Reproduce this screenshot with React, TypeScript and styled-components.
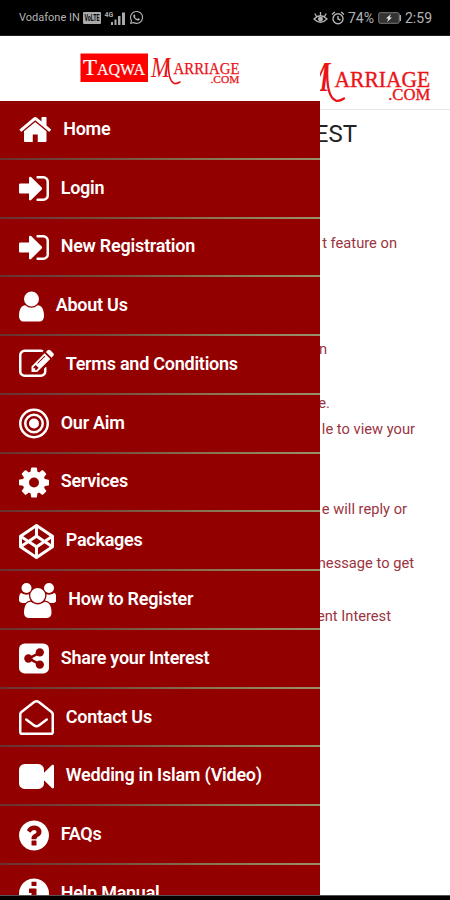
import React from 'react';
import styled, { createGlobalStyle } from 'styled-components';
import { FaCodepen, FaWhatsapp } from 'react-icons/fa';

const GlobalStyle = createGlobalStyle`
  * { box-sizing: border-box; }
  body { margin: 0; background: #fff; font-family: Roboto, "Liberation Sans", sans-serif; }
`;

const Screen = styled.div`
  width: 450px;
  height: 900px;
  display: flex;
  flex-direction: column;
  overflow: hidden;
  background: #fff;
`;

const StatusBar = styled.header`
  flex: none;
  height: 36px;
  padding: 0 18px 0 19px;
  display: flex;
  align-items: center;
  justify-content: space-between;
  background: #000;
  color: #b4b4b4;
  border-bottom: 1px solid #222;
`;

const StatusGroup = styled.div<{ $gap: number }>`
  display: flex;
  align-items: center;
  gap: ${(p) => p.$gap}px;
  svg { display: block; flex: none; }
`;

const Carrier = styled.span`
  font-size: 11px;
  line-height: 14px;
  width: 61px;
  white-space: nowrap;
`;

const StatusText = styled.span<{ $size: number; $width: number }>`
  width: ${(p) => p.$width}px;
  font-size: ${(p) => p.$size}px;
  line-height: 18px;
  white-space: nowrap;
`;

const Body = styled.div`
  flex: none;
  display: flex;
  height: 859px;
`;

const Drawer = styled.nav`
  flex: none;
  width: 320px;
  height: 859px;
  overflow: hidden;
  background: #fff;
`;

const DrawerHeader = styled.div`
  height: 65px;
  padding: 16px 0 0 80px;
  svg { display: block; }
`;

const MenuItem = styled.a`
  display: flex;
  align-items: center;
  height: 58.77px;
  padding: 0 0 1px 18.5px;
  gap: 12.2px;
  color: #fff;
  background: linear-gradient(90deg, #6a3030 0%, #75503f 35%, #8a7a55 70%, #99906a 100%) bottom / 100% 2px no-repeat, #930000;
`;

const MenuIcon = styled.svg`
  display: block;
  flex: none;
  height: 35px;
  fill: currentColor;
`;

const MenuLabel = styled.span`
  margin-top: -2px;
  font-size: 18px;
  line-height: 24px;
  font-weight: 600;
  letter-spacing: -0.25px;
  white-space: nowrap;
`;

const Page = styled.main`
  flex: 1;
  min-width: 0;
  height: 859px;
  overflow: hidden;
  background: #fff;
`;

const PageHeader = styled.div`
  height: 74px;
  padding-top: 19px;
  display: flex;
  justify-content: flex-end;
  padding-right: 19px;
  overflow: hidden;
  border-bottom: 1px solid #e6e6e6;
  svg { flex: none; }
`;

const ClippedLine = styled.div<{ $top: number; $right: number }>`
  display: flex;
  justify-content: flex-end;
  margin-top: ${(p) => p.$top}px;
  padding-right: ${(p) => p.$right}px;
  overflow: hidden;
  white-space: nowrap;
`;

const Title = styled.h1`
  margin: 0;
  font-size: 24px;
  line-height: 30px;
  font-weight: 400;
  color: #222;
`;

const Copy = styled.p`
  flex: none;
  margin: 0;
  font-size: 14.7px;
  line-height: 20px;
  color: #9a3440;
`;

const NavigationBar = styled.div`
  flex: 1;
  background: #000;
  border-top: 1px solid #555;
`;

const DISC =
  'm640 416q0 209-103 385.5t-279.5 279.5-385.5 103-385.5-103-279.5-279.5-103-385.5 103-385.5 279.5-279.5 385.5-103 385.5 103 279.5 279.5 103 385.5z';

const PATHS = {
  home: 'M1472 992v480q0 26-19 45t-45 19h-384v-384h-256v384h-384q-26 0-45-19t-19-45v-480q0-1 .5-3t.5-3l575-474 575 474q1 2 1 6zm223-69l-62 74q-8 9-21 11h-3q-13 0-21-7l-692-577-692 577q-12 8-24 7-13-2-21-11l-62-74q-8-10-7-23.5t11-21.5l719-599q32-26 76-26t76 26l244 204v-195q0-14 9-23t23-9h192q14 0 23 9t9 23v408l219 182q10 8 11 21.5t-7 23.5z',
  signIn:
    'M1312 896q0 26-19 45l-544 544q-19 19-45 19t-45-19-19-45v-288h-448q-26 0-45-19t-19-45v-384q0-26 19-45t45-19h448v-288q0-26 19-45t45-19 45 19l544 544q19 19 19 45zm352-352v704q0 119-84.5 203.5t-203.5 84.5h-320q-13 0-22.5-9.5t-9.5-22.5q0-4-1-20t-.5-26.5 3-23.5 10-19.5 20.5-6.5h320q66 0 113-47t47-113v-704q0-66-47-113t-113-47h-312l-11.5-1-11.5-3-8-5.5-7-9-2-13.5q0-4-1-20t-.5-26.5 3-23.5 10-19.5 20.5-6.5h320q119 0 203.5 84.5t84.5 203.5z',
  user: 'M1536 1399q0 109-62.5 187t-150.5 78h-854q-88 0-150.5-78t-62.5-187q0-85 8.5-160.5t31.5-152 58.5-131 94-89 134.5-34.5q131 128 313 128t313-128q76 0 134.5 34.5t94 89 58.5 131 31.5 152 8.5 160.5zm-256-887q0 159-112.5 271.5t-271.5 112.5-271.5-112.5-112.5-271.5 112.5-271.5 271.5-112.5 271.5 112.5 112.5 271.5z',
  edit: 'M888 1184l116-116-152-152-116 116v56h96v96h56zm440-720q-16-16-33 1l-350 350q-17 17-1 33t33-1l350-350q17-17 1-33zm80 594v190q0 119-84.5 203.5t-203.5 84.5h-832q-119 0-203.5-84.5t-84.5-203.5v-832q0-119 84.5-203.5t203.5-84.5h832q63 0 117 25 15 7 18 23 3 17-9 29l-49 49q-14 14-32 8-23-6-45-6h-832q-66 0-113 47t-47 113v832q0 66 47 113t113 47h832q66 0 113-47t47-113v-126q0-13 9-22l64-64q15-15 35-7t20 29zm-96-738l288 288-672 672h-288v-288zm444 132l-92 92-288-288 92-92q28-28 68-28t68 28l152 152q28 28 28 68t-28 68z',
  cog: 'M1152 896q0-106-75-181t-181-75-181 75-75 181 75 181 181 75 181-75 75-181zm512-109v222q0 12-8 23t-20 13l-185 28q-19 54-39 91 35 50 107 138 10 12 10 25t-9 23q-27 37-99 108t-94 71q-12 0-26-9l-138-108q-44 23-91 38-16 136-29 186-7 28-36 28h-222q-14 0-24.5-8.5t-11.5-21.5l-28-184q-49-16-90-37l-141 107q-10 9-25 9-14 0-25-11-126-114-165-168-7-10-7-23 0-12 8-23 15-21 51-66.5t54-70.5q-27-50-41-99l-183-27q-13-2-21-12.5t-8-23.5v-222q0-12 8-23t19-13l186-28q14-46 39-92-40-57-107-138-10-12-10-24 0-10 9-23 26-36 98.5-107.5t94.5-71.5q13 0 26 10l138 107q44-23 91-38 16-136 29-186 7-28 36-28h222q14 0 24.5 8.5t11.5 21.5l28 184q49 16 90 37l142-107q9-9 24-9 13 0 25 10 129 119 165 170 7 8 7 22 0 12-8 23-15 21-51 66.5t-54 70.5q26 50 41 98l183 28q13 2 21 12.5t8 23.5z',
  users:
    'M657 896q-162 5-265 128h-134q-82 0-138-40.5t-56-118.5q0-353 124-353 6 0 43.5 21t97.5 42.5 119 21.5q67 0 133-23-5 37-5 66 0 139 81 256zm1071 637q0 120-73 189.5t-194 69.5h-874q-121 0-194-69.5t-73-189.5q0-53 3.5-103.5t14-109 26.5-108.5 43-97.5 62-81 85.5-53.5 111.5-20q10 0 43 21.5t73 48 107 48 135 21.5 135-21.5 107-48 73-48 43-21.5q61 0 111.5 20t85.5 53.5 62 81 43 97.5 26.5 108.5 14 109 3.5 103.5zm-1024-1277q0 106-75 181t-181 75-181-75-75-181 75-181 181-75 181 75 75 181zm704 384q0 159-112.5 271.5t-271.5 112.5-271.5-112.5-112.5-271.5 112.5-271.5 271.5-112.5 271.5 112.5 112.5 271.5zm576 225q0 78-56 118.5t-138 40.5h-134q-103-123-265-128 81-117 81-256 0-29-5-66 66 23 133 23 59 0 119-21.5t97.5-42.5 43.5-21q124 0 124 353zm-128-609q0 106-75 181t-181 75-181-75-75-181 75-181 181-75 181 75 75 181z',
  video:
    'M1792 352v1088q0 42-39 59-13 5-25 5-27 0-45-19l-403-403v166q0 119-84.5 203.5t-203.5 84.5h-704q-119 0-203.5-84.5t-84.5-203.5v-704q0-119 84.5-203.5t203.5-84.5h704q119 0 203.5 84.5t84.5 203.5v165l403-402q18-19 45-19 12 0 25 5 39 17 39 59z',
  question:
    'M1024 1376v-192q0-14-9-23t-23-9h-192q-14 0-23 9t-9 23v192q0 14 9 23t23 9h192q14 0 23-9t9-23zm256-672q0-88-55.5-163t-138.5-116-170-41q-243 0-371 213-15 24 8 42l132 100q7 6 19 6 16 0 25-12 53-68 86-92 34-24 86-24 48 0 85.5 26t37.5 59q0 38-20 61t-68 45q-63 28-115.5 86.5t-52.5 125.5v36q0 14 9 23t23 9h192q14 0 23-9t9-23q0-19 21.5-49.5t54.5-49.5q32-18 49-28.5t46-35 44.5-48 28-60.5 12.5-81zm384 192q0 209-103 385.5t-279.5 279.5-385.5 103-385.5-103-279.5-279.5-103-385.5 103-385.5 279.5-279.5 385.5-103 385.5 103 279.5 279.5 103 385.5z',
  info:
    'M1152 1376v-160q0-14-9-23t-23-9h-96v-512q0-14-9-23t-23-9h-320q-14 0-23 9t-9 23v160q0 14 9 23t23 9h96v320h-96q-14 0-23 9t-9 23v160q0 14 9 23t23 9h448q14 0 23-9t9-23zm-128-896v-160q0-14-9-23t-23-9h-192q-14 0-23 9t-9 23v160q0 14 9 23t23 9h192q14 0 23-9t9-23z' + DISC,
};

const UNIT = 35 / 1792;

const Glyph = ({ x, w, children }: { x: number; w: number; children: React.ReactNode }) => (
  <MenuIcon viewBox={`${x} 0 ${w} 1792`} width={w * UNIT}>
    {children}
  </MenuIcon>
);

const TargetIcon = () => (
  <Glyph x={128} w={1536}>
    <circle cx="896" cy="896" r="256" />
    <circle cx="896" cy="896" r="448" fill="none" stroke="currentColor" strokeWidth="128" />
    <circle cx="896" cy="896" r="704" fill="none" stroke="currentColor" strokeWidth="128" />
  </Glyph>
);

const ShareIcon = () => (
  <Glyph x={128} w={1536}>
    <rect x="128" y="128" width="1536" height="1536" rx="288" />
    <g fill="#930000">
      <path d="M1190 590 L640 896 L1190 1202" fill="none" stroke="#930000" strokeWidth="130" />
      <circle cx="1194" cy="582" r="212" />
      <circle cx="608" cy="896" r="212" />
      <circle cx="1194" cy="1210" r="212" />
    </g>
  </Glyph>
);

const MailOpenIcon = () => (
  <Glyph x={0} w={1792}>
    <g fill="none" stroke="currentColor" strokeWidth="128" strokeLinejoin="round" strokeLinecap="round">
      <path d="M64 730 Q64 660 125 610 L760 120 Q896 10 1032 120 L1667 610 Q1728 660 1728 730 V1632 Q1728 1728 1632 1728 H160 Q64 1728 64 1632 Z" />
      <path d="M370 1000 L760 1295 Q896 1395 1032 1295 L1422 1000" />
    </g>
  </Glyph>
);

const items: { label: string; icon: React.ReactNode }[] = [
  { label: 'Home', icon: <Glyph x={64} w={1664}><path d={PATHS.home} /></Glyph> },
  { label: 'Login', icon: <Glyph x={128} w={1536}><path d={PATHS.signIn} /></Glyph> },
  { label: 'New Registration', icon: <Glyph x={128} w={1536}><path d={PATHS.signIn} /></Glyph> },
  { label: 'About Us', icon: <Glyph x={256} w={1280}><path d={PATHS.user} /></Glyph> },
  { label: 'Terms and Conditions', icon: <Glyph x={0} w={1792}><path d={PATHS.edit} /></Glyph> },
  { label: 'Our Aim', icon: <TargetIcon /> },
  { label: 'Services', icon: <Glyph x={128} w={1536}><path d={PATHS.cog} /></Glyph> },
  { label: 'Packages', icon: <FaCodepen size={35} /> },
  { label: 'How to Register', icon: <Glyph x={64} w={1920}><path d={PATHS.users} /></Glyph> },
  { label: 'Share your Interest', icon: <ShareIcon /> },
  { label: 'Contact Us', icon: <MailOpenIcon /> },
  { label: 'Wedding in Islam (Video)', icon: <Glyph x={0} w={1792}><path d={PATHS.video} /></Glyph> },
  { label: 'FAQs', icon: <Glyph x={128} w={1536}><path d={PATHS.question} /></Glyph> },
  { label: 'Help Manual', icon: <Glyph x={128} w={1536}><path d={PATHS.info} /></Glyph> },
];

const Logo = ({ width }: { width: number }) => (
  <svg width={width} height={(width * 37) / 160} viewBox="0 0 160 37" fontFamily='"Liberation Serif", serif'>
    <rect x="0.5" y="1.5" width="67.5" height="28.5" fill="#fe0000" />
    <g fill="#fff" stroke="#fff" strokeWidth="0.2">
      <text x="3" y="22.500" fontSize="24" textLength="14" lengthAdjust="spacingAndGlyphs">T</text>
      <text x="17" y="22.500" fontSize="17" textLength="48" lengthAdjust="spacingAndGlyphs">AQWA</text>
    </g>
    <g fill="#ea1418">
      <text x="71" y="25" fontSize="29" fontStyle="italic" textLength="19" lengthAdjust="spacingAndGlyphs">M</text>
      <path d="M88.500 7 Q87.500 29 94.500 31.500 Q97 32 100 30" fill="none" stroke="#ea1418" strokeWidth="1.6" strokeLinecap="round" />
      <g stroke="#ea1418" strokeWidth="0.25">
        <text x="93.500" y="21.800" fontSize="16.300" textLength="66" lengthAdjust="spacingAndGlyphs">ARRIAGE</text>
        <text x="130.500" y="31" fontSize="10.800" textLength="29" lengthAdjust="spacingAndGlyphs">.COM</text>
      </g>
    </g>
  </svg>
);

const VolteBadge = () => (
  <svg width="18" height="12" viewBox="0 0 18 12">
    <rect width="18" height="12" rx="1" fill="#aaa" />
    <text x="1.500" y="9" fontSize="8.500" fontWeight="800" fill="#111" textLength="15" lengthAdjust="spacingAndGlyphs">VoLTE</text>
  </svg>
);

const SignalIcon = () => (
  <svg width="22" height="14" viewBox="0 0 22 14" fill="#aaa">
    <text x="0.500" y="6" fontSize="7" fontWeight="700">4G</text>
    <rect x="7" y="11" width="2" height="3" />
    <rect x="10.500" y="8.500" width="2" height="5.500" />
    <rect x="14" y="5" width="2.500" height="9" />
    <rect x="18" y="1.500" width="3" height="12.500" />
  </svg>
);

const EyeIcon = () => (
  <svg width="15" height="14" viewBox="0 0 15 14" fill="none" stroke="currentColor" strokeWidth="1.3">
    <path d="M1 8 Q7.500 1.500 14 8 Q7.500 14.500 1 8Z M7.500 4.500V1 M3.500 5.500L1.800 2.500 M11.500 5.500L13.200 2.500" />
    <circle cx="7.500" cy="8" r="1.800" fill="currentColor" />
  </svg>
);

const AlarmIcon = () => (
  <svg width="14" height="14" viewBox="0 0 14 14" fill="none" stroke="currentColor" strokeWidth="1.4">
    <circle cx="7" cy="7.800" r="5" />
    <path d="M7 5V8L9.500 9 M1 3.500L3.800 1 M13 3.500L10.200 1" />
  </svg>
);

const BatteryIcon = () => (
  <svg width="24" height="12" viewBox="0 0 24 12">
    <rect x="0.700" y="0.700" width="20.500" height="10.600" rx="1.500" fill="#333" stroke="#777" />
    <path d="M22.300 3v6" stroke="#aaa" strokeWidth="1.500" />
    <path d="M13 2L8 6.500h2.500L9 10l5-4.500h-2.500z" fill="#eee" />
  </svg>
);

export default function App() {
  return (
    <>
      <GlobalStyle />
      <Screen>
        <StatusBar>
          <StatusGroup $gap={3}>
            <Carrier>Vodafone IN</Carrier>
            <VolteBadge />
            <SignalIcon />
            <FaWhatsapp size={15} />
          </StatusGroup>
          <StatusGroup $gap={3}>
            <EyeIcon />
            <AlarmIcon />
            <StatusText $size={14} $width={27}>74%</StatusText>
            <BatteryIcon />
            <StatusText $size={14} $width={27}>2:59</StatusText>
          </StatusGroup>
        </StatusBar>
        <Body>
          <Drawer>
            <DrawerHeader>
              <Logo width={160} />
            </DrawerHeader>
            {items.map((item) => (
              <MenuItem key={item.label}>
                {item.icon}
                <MenuLabel>{item.label}</MenuLabel>
              </MenuItem>
            ))}
          </Drawer>
          <Page>
            <PageHeader>
              <Logo width={232} />
            </PageHeader>
            <ClippedLine $top={9} $right={93}><Title>EST</Title></ClippedLine>
            <ClippedLine $top={84} $right={53}><Copy>t feature on</Copy></ClippedLine>
            <ClippedLine $top={86} $right={123}><Copy>n</Copy></ClippedLine>
            <ClippedLine $top={34} $right={120}><Copy>e.</Copy></ClippedLine>
            <ClippedLine $top={6} $right={35}><Copy>le to view your</Copy></ClippedLine>
            <ClippedLine $top={60} $right={43}><Copy>e will reply or</Copy></ClippedLine>
            <ClippedLine $top={34} $right={36}><Copy>message to get</Copy></ClippedLine>
            <ClippedLine $top={33} $right={59}><Copy>ent Interest</Copy></ClippedLine>
          </Page>
        </Body>
        <NavigationBar />
      </Screen>
    </>
  );
}
